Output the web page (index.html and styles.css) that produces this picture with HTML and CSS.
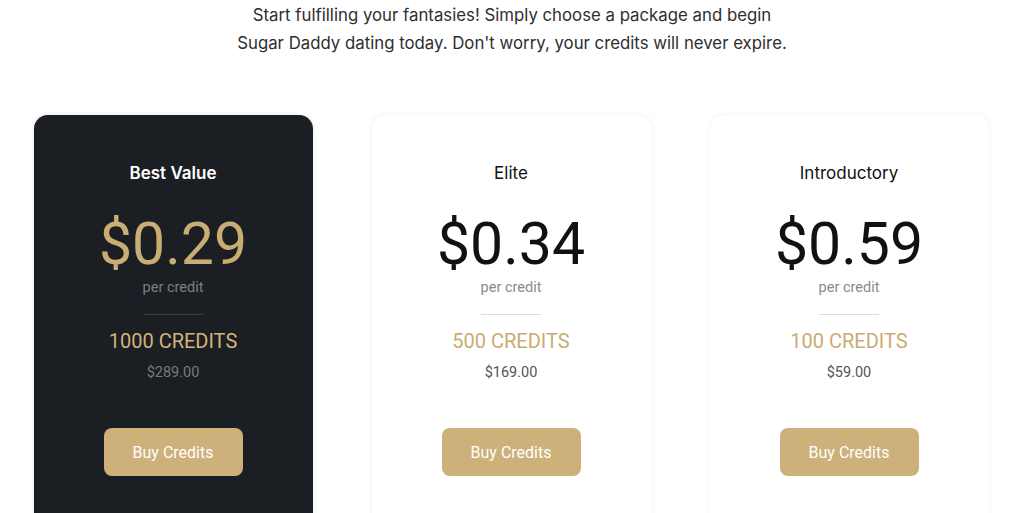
FILE: index.html
```html
<!DOCTYPE html>
<html>
<head>
<meta charset="utf-8">
<link rel="stylesheet" href="styles.css">
</head>
<body>
<section class="pricing">
  <p class="intro">Start fulfilling your fantasies! Simply choose a package and begin<br>Sugar Daddy dating today. Don't worry, your credits will never expire.</p>
  <div class="cards">
    <div class="card card-dark">
      <h3 class="title">Best Value</h3>
      <div class="price">$0.29</div>
      <div class="per">per credit</div>
      <div class="divider"></div>
      <div class="credits">1000 CREDITS</div>
      <div class="total">$289.00</div>
      <button class="buy">Buy Credits</button>
    </div>
    <div class="card">
      <h3 class="title">Elite</h3>
      <div class="price">$0.34</div>
      <div class="per">per credit</div>
      <div class="divider"></div>
      <div class="credits">500 CREDITS</div>
      <div class="total">$169.00</div>
      <button class="buy">Buy Credits</button>
    </div>
    <div class="card">
      <h3 class="title">Introductory</h3>
      <div class="price">$0.59</div>
      <div class="per">per credit</div>
      <div class="divider"></div>
      <div class="credits">100 CREDITS</div>
      <div class="total">$59.00</div>
      <button class="buy">Buy Credits</button>
    </div>
  </div>
</section>
</body>
</html>
```

FILE: styles.css
```css
html, body {
  margin: 0;
  padding: 0;
  background: #ffffff;
  overflow: hidden;
}
body {
  font-family: Roboto, "Liberation Sans", sans-serif;
}
.pricing {
  padding-top: 1px;
}
.intro {
  margin: 0;
  text-align: center;
  font-family: Inter, "Liberation Sans", sans-serif;
  font-size: 16.8px;
  line-height: 28px;
  color: #2e2e2e;
}
.cards {
  display: flex;
  justify-content: center;
  gap: 59px;
  margin-top: 58px;
  padding-right: 2px;
}
.card {
  width: 279px;
  height: 460px;
  box-sizing: border-box;
  background: #ffffff;
  border-radius: 14px;
  box-shadow: 0 0 6px rgba(0, 0, 0, 0.07);
  display: flex;
  flex-direction: column;
  align-items: center;
  padding-top: 46px;
  color: #111111;
}
.card-dark {
  background: #1b1e22;
  box-shadow: 0 0 4px rgba(0, 0, 0, 0.1);
}
.title {
  margin: 0;
  font-family: Inter, "Liberation Sans", sans-serif;
  font-weight: 400;
  font-size: 17px;
  line-height: 24px;
  color: #111111;
}
.card-dark .title {
  color: #ffffff;
  font-weight: 600;
}
.price {
  margin-top: 27px;
  font-size: 59px;
  line-height: 64px;
  font-weight: 400;
  color: #111111;
}
.card-dark .price {
  color: #c9ad74;
}
.per {
  margin-top: 2px;
  font-size: 14.5px;
  line-height: 20px;
  color: #8a8a8a;
}
.card-dark .per {
  color: #7d7f82;
}
.divider {
  margin-top: 16px;
  width: 60px;
  height: 1px;
  background: #dddddd;
}
.card-dark .divider {
  background: #3a3d40;
}
.credits {
  margin-top: 13px;
  font-size: 20px;
  line-height: 26px;
  font-weight: 400;
  color: #c9ac74;
}
.card-dark .credits {
  color: #d2b57d;
}
.total {
  margin-top: 9px;
  font-size: 14.5px;
  line-height: 20px;
  color: #555555;
}
.card-dark .total {
  color: #77797c;
}
.buy {
  margin-top: 45px;
  width: 139px;
  height: 48px;
  border: none;
  border-radius: 8px;
  background: #cdb07a;
  color: #ffffff;
  font-family: Roboto, "Liberation Sans", sans-serif;
  font-size: 16px;
  cursor: pointer;
}
```
